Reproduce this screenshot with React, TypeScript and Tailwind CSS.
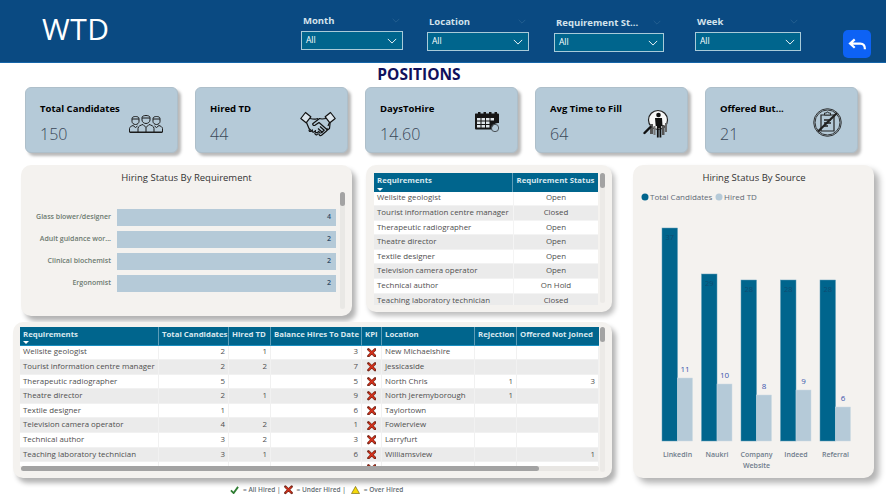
import React from 'react';

const font = "font-['Open_Sans',sans-serif]";

const Chevron = ({ className }: { className: string }) => (
    <svg viewBox="0 0 12 7" className={className} fill="none" stroke="currentColor" strokeWidth="1.1">
        <path d="M1 1l5 5 5-5" />
    </svg>
);

const Slicer = ({ label, className, boxWidth }: { label: string; className: string; boxWidth: string }) => (
    <div className={`flex flex-col ${className} ${boxWidth}`}>
        <div className="flex items-center justify-between h-[13px] pl-[2px] pr-[3px]">
            <span className="text-[9.5px] font-bold text-[#d3e3ec] whitespace-nowrap">{label}</span>
            <Chevron className="w-[8px] h-[5px] text-[#2f6796] mb-[3px]" />
        </div>
        <div className="mt-[3px] h-[19px] flex items-center justify-between bg-[#00658d] border border-[#a9cbd9] pl-[4px] pr-[5px]">
            <span className="text-[8.5px] text-white">All</span>
            <Chevron className="w-[10px] h-[6px] text-white" />
        </div>
    </div>
);

const PeopleIcon = () => (
    <svg viewBox="0 0 34 18" className="w-[34px] h-[18px]" fill="none" stroke="#1b1b1b" strokeWidth="1">
        <path d="M3 6.500V3.500C3 2 5 1.500 6.500 1.500S10 2 10 3.500v3c0 1.500-1.500 3-3.500 3S3 8 3 6.500zM3 4h7" />
        <path d="M24 6.500V3.500C24 2 26 1.500 27.500 1.500S31 2 31 3.500v3c0 1.500-1.500 3-3.500 3S24 8 24 6.500zM24 4h7" />
        <path d="M13 5V2.500C13 1 15.500.500 17 .500S21 1 21 2.500V5c0 2-2 3.500-4 3.500S13 7 13 5zM13 3h8" />
        <path d="M.5 17v-3.500c0-1.500 2-2.500 3.500-3l2.500 2 2-1.500M33.500 17v-3.500c0-1.500-2-2.500-3.500-3l-2.500 2-2-1.500" />
        <path d="M9 17v-3.500C9 11 12 10 14 9.500l3 3 3-3c2 .500 5 1.500 5 4V17M17 12.500V17" />
        <path d="M.5 17.300h33" strokeWidth="1.400" />
    </svg>
);

const HandshakeIcon = () => (
    <svg viewBox="0 0 36 28" className="w-[36px] h-[28px]" fill="none" stroke="#111" strokeWidth="1.200" strokeLinejoin="round">
        <path d="M.8 7.500L5.500 1.500l5.300 4.300-4.700 6z" fill="#dbe5ec" />
        <path d="M35.200 7.500L30.500 1.500l-5.300 4.300 4.700 6z" fill="#dbe5ec" />
        <path d="M10 7.500c2 .500 4 1 6 .500l2-.500M26 7.500l-4 .500-2.500-.500-6.500 5c-1 1 .500 2.500 2 1.800l4-2.800 8.500 7.500 2-1.500 .5-4.500 0-1" />
        <path d="M6.500 11.500l2.500 6 2 2" />
        <path d="M29.500 11.500l-1.500 3.500" />
        <path d="M9.500 18.500c-1 1 0 2.500 1.500 1.700l1.500-1.200c-1 1.200 0 2.700 1.500 1.900l1.500-1.300c-.800 1.300.500 2.700 2 1.800l1.500-1.200c-.500 1.300 1 2.300 2.200 1.500l3-2.500" />
        <path d="M15 21.800c-.500 1.200 .800 2.400 2 1.800l1.500-1.200M19 23c0 1.200 1.200 2 2.500 1.200l5-4.200c1.200-1 .800-2.200 .200-2.700" />
        <path d="M20 15.500l4.500 4M18 17.500l4.500 4" />
    </svg>
);

const CalendarIcon = () => (
    <svg viewBox="0 0 26 21" className="w-[26px] h-[21px]">
        <path d="M1.500 2.500H4V1h2.500v1.500h3V1H12v1.500h3V1h2.500v1.500h3V1H23v1.500h1a1 1 0 0 1 1 1V12a6 6 0 0 0-7 6.500H2a1 1 0 0 1-1-1V3a.5.5 0 0 1 .5-.5z" fill="#161616" />
        <g fill="#dfe6ea">
            <rect x="3" y="7" width="3.500" height="2.500" />
            <rect x="7.500" y="7" width="3.500" height="2.500" />
            <rect x="12" y="7" width="3.500" height="2.500" />
            <rect x="16.500" y="7" width="3.500" height="2.500" />
            <rect x="3" y="10.500" width="3.500" height="2.500" />
            <rect x="7.500" y="10.500" width="3.500" height="2.500" />
            <rect x="12" y="10.500" width="3.500" height="2.500" />
            <rect x="3" y="14" width="3.500" height="2.500" />
            <rect x="7.500" y="14" width="3.500" height="2.500" />
            <rect x="12" y="14" width="3.500" height="2.500" />
        </g>
        <circle cx="21" cy="17" r="3.700" fill="none" stroke="#4b5257" strokeWidth="1" />
    </svg>
);

const SearchPersonIcon = () => (
    <svg viewBox="0 0 26 29" className="w-[26px] h-[29px]">
        <circle cx="15" cy="11" r="9.500" fill="#f6f7f7" stroke="#222" strokeWidth="1.200" />
        <rect x="7" y="15" width="3" height="10" fill="#555" />
        <rect x="10.500" y="17" width="2" height="9" fill="#777" />
        <rect x="19" y="16" width="2.500" height="10" fill="#555" />
        <rect x="22" y="14" width="2" height="9" fill="#666" />
        <circle cx="15.500" cy="6" r="2.300" fill="#111" />
        <path d="M12 9h7l.500 8h-1.200v11.500h-1.800V19h-.800v9.500h-1.800V17h-1.200z" fill="#111" />
        <path d="M7.500 18L1.500 24" stroke="#111" strokeWidth="2.400" strokeLinecap="round" />
    </svg>
);

const NoClipboardIcon = () => (
    <svg viewBox="0 0 29 29" className="w-[29px] h-[29px]" fill="none" stroke="#222" strokeWidth="0.900">
        <circle cx="14.500" cy="14.500" r="13.800" />
        <circle cx="14.500" cy="14.500" r="12.500" />
        <path d="M8 7h13v16H8z" strokeWidth="1.200" />
        <path d="M11.500 7V5h2c0-1.500 2-1.500 2 0h2v2z" fill="#b5cad8" />
        <path d="M11 12h7M11 15h7M11 18h4" strokeWidth="1.300" />
        <path d="M5 23.500L24 5" strokeWidth="2.200" />
    </svg>
);

const KpiCard = ({ title, value, icon, iconClass }: { title: string; value: string; icon: React.ReactNode; iconClass: string }) => (
    <div className="relative w-[153px] h-[66px] bg-[#b5cad8] rounded-[6px] border border-[#aebfca] shadow-[3px_3px_3px_rgba(0,0,0,0.28)] pl-[14px]">
        <div className="pt-[14px] h-[29px] text-[9.5px] leading-[13px] font-bold text-black whitespace-nowrap">{title}</div>
        <div className="mt-[6px] text-[16px] leading-[22px] font-light text-[#3b4859]">{value}</div>
        <div className={`absolute ${iconClass}`}>{icon}</div>
    </div>
);

const hbars = [
    { name: 'Glass blower/designer', v: 4 },
    { name: 'Adult guidance wor...', v: 2 },
    { name: 'Clinical biochemist', v: 2 },
    { name: 'Ergonomist', v: 2 },
];

const BarPanel = () => (
    <div className="relative w-[331px] h-[151px] bg-[#f4f2ef] rounded-[10px] shadow-[4px_5px_5px_rgba(0,0,0,0.3)]">
        <div className="pt-[6px] text-center text-[9.500px] leading-[14px] text-[#333]">Hiring Status By Requirement</div>
        <div className="mt-[24px] flex flex-col gap-[5.500px]">
            {hbars.map(b => (
                <div key={b.name} className="flex items-center h-[16.500px]">
                    <div className="w-[90px] text-right text-[7px] font-semibold text-[#6c7a70] whitespace-nowrap">{b.name}</div>
                    <div className="ml-[6px] w-[219px] h-full bg-[#b5cad8] flex items-center justify-end pr-[5px] text-[7px] font-semibold text-[#2f4a66]">{b.v}</div>
                </div>
            ))}
        </div>
        <div className="absolute left-[319px] top-[27px] w-[5px] h-[117px] bg-[#e9e8e5] rounded-full">
            <div className="w-full h-[14px] bg-[#a3a3a3] rounded-full" />
        </div>
    </div>
);

const SortMark = () => (
    <svg viewBox="0 0 6 3" className="absolute left-[3px] bottom-[1px] w-[6px] h-[3px]">
        <path d="M0 0h6L3 3z" fill="#fff" />
    </svg>
);

const statusRows = [
    ['Wellsite geologist', 'Open'],
    ['Tourist information centre manager', 'Closed'],
    ['Therapeutic radiographer', 'Open'],
    ['Theatre director', 'Open'],
    ['Textile designer', 'Open'],
    ['Television camera operator', 'Open'],
    ['Technical author', 'On Hold'],
    ['Teaching laboratory technician', 'Closed'],
];

const headCell = 'relative flex items-start pt-[1px] px-[3px] bg-[#00658d] border-r border-[#5d9db8] text-[7.800px] leading-[12px] font-bold text-[#d8e8ef] whitespace-nowrap';

const StatusTable = () => (
    <div className="relative w-[246px] h-[147px] ml-[14px] bg-[#f4f2ef] rounded-[10px] shadow-[3px_4px_5px_rgba(0,0,0,0.25)] pl-[8px] pt-[8px]">
        <div className="w-[224px] h-[132px] overflow-hidden">
            <div className="grid grid-cols-[139px_85px] grid-rows-[18.500px] auto-rows-[14.600px] text-[7.900px] text-[#4f4f4f]">
                <div className={headCell}>Requirements<SortMark /></div>
                <div className={`${headCell} justify-center border-r-0`}>Requirement Status</div>
                {statusRows.map((r, i) => (
                    <React.Fragment key={r[0]}>
                        <div className={`flex items-center pl-[3px] border-b border-[#f2f2f2] whitespace-nowrap ${i % 2 ? 'bg-[#ebebeb]' : 'bg-white'}`}>{r[0]}</div>
                        <div className={`flex items-center justify-center border-l border-[#f4f4f4] border-b ${i % 2 ? 'bg-[#ebebeb]' : 'bg-white'}`}>{r[1]}</div>
                    </React.Fragment>
                ))}
            </div>
        </div>
        <div className="absolute left-[234px] top-[8px] w-[5px] h-[130px] bg-[#eceae7] rounded-full">
            <div className="w-full h-[15px] bg-[#a3a3a3] rounded-full" />
        </div>
    </div>
);

const RedX = () => (
    <svg viewBox="0 0 10 10" className="w-[9.500px] h-[9.500px]">
        <path d="M1.500 1.500l7 7M8.500 1.500l-7 7" stroke="#7a2a1c" strokeWidth="2.800" strokeLinecap="round" />
        <path d="M1.800 1.800l6.400 6.400M8.200 1.800l-6.400 6.400" stroke="#d8301a" strokeWidth="1.500" />
    </svg>
);

const mainRows = [
    ['Wellsite geologist', '2', '1', '3', 'New Michaelshire', '', ''],
    ['Tourist information centre manager', '2', '2', '7', 'Jessicaside', '', ''],
    ['Therapeutic radiographer', '5', '', '5', 'North Chris', '1', '3'],
    ['Theatre director', '2', '1', '9', 'North Jeremyborough', '1', ''],
    ['Textile designer', '1', '', '6', 'Taylortown', '', ''],
    ['Television camera operator', '4', '2', '1', 'Fowlerview', '', ''],
    ['Technical author', '3', '2', '3', 'Larryfurt', '', ''],
    ['Teaching laboratory technician', '3', '1', '6', 'Williamsview', '', '1'],
    ['Teaching assistant', '1', '', '2', 'Lindaton', '', ''],
];

const MainTable = () => {
    const cell = 'flex items-center border-b border-r border-[#f1f1f1] px-[3px] whitespace-nowrap';
    const head = `${headCell} border-b border-b-[#1a8fc0]`;
    return (
        <div className="relative w-[599px] h-[156px] mt-[6px] bg-[#f4f2ef] rounded-[10px] shadow-[4px_5px_5px_rgba(0,0,0,0.3)] pl-[7px] pt-[5px]">
            <div className="w-[579px] h-[139px] overflow-hidden">
                <div className="grid grid-cols-[139px_70px_42px_91px_20px_93px_42px_82px] grid-rows-[18.500px] auto-rows-[14.600px] text-[7.900px] text-[#4f4f4f]">
                    <div className={head}>Requirements<SortMark /></div>
                    <div className={head}>Total Candidates</div>
                    <div className={head}>Hired TD</div>
                    <div className={head}>Balance Hires To Date</div>
                    <div className={head}>KPI</div>
                    <div className={head}>Location</div>
                    <div className={head}>Rejection</div>
                    <div className={`${head} border-r-0`}>Offered Not Joined</div>
                    {mainRows.map((r, i) => {
                        const bg = i % 2 ? 'bg-[#ebebeb]' : 'bg-white';
                        return (
                            <React.Fragment key={r[0]}>
                                <div className={`${cell} ${bg}`}>{r[0]}</div>
                                <div className={`${cell} ${bg} justify-end`}>{r[1]}</div>
                                <div className={`${cell} ${bg} justify-end`}>{r[2]}</div>
                                <div className={`${cell} ${bg} justify-end`}>{r[3]}</div>
                                <div className={`${cell} ${bg} justify-center`}><RedX /></div>
                                <div className={`${cell} ${bg}`}>{r[4]}</div>
                                <div className={`${cell} ${bg} justify-end`}>{r[5]}</div>
                                <div className={`${cell} ${bg} justify-end`}>{r[6]}</div>
                            </React.Fragment>
                        );
                    })}
                </div>
            </div>
            <div className="ml-[1px] w-[578px] h-[5px] bg-[#e8e6e3] rounded-full">
                <div className="w-[518px] h-full bg-[#a3a3a3] rounded-full" />
            </div>
            <div className="absolute left-[587px] top-[5px] w-[5px] h-[145px] bg-[#eceae7] rounded-full">
                <div className="w-full h-[15px] bg-[#a3a3a3] rounded-full" />
            </div>
        </div>
    );
};

const sources = [
    { name: ['LinkedIn'], total: 37, hired: 11, x: 29, top: 63, hiredTop: 213 },
    { name: ['Naukri'], total: 29, hired: 10, x: 68.500, top: 109, hiredTop: 219 },
    { name: ['Company', 'Website'], total: 28, hired: 8, x: 108, top: 115, hiredTop: 230 },
    { name: ['Indeed'], total: 28, hired: 9, x: 147.500, top: 115, hiredTop: 225 },
    { name: ['Referral'], total: 28, hired: 6, x: 187, top: 115, hiredTop: 242 },
];

const SourceChart = () => (
    <div className="w-[241px] h-[313px] bg-[#f4f2ef] rounded-[10px] shadow-[5px_5px_6px_rgba(0,0,0,0.3)]">
        <svg viewBox="0 0 241 313" className="w-[241px] h-[313px]">
            <g fontFamily="'Open Sans',sans-serif">
                <text x="121" y="16" textAnchor="middle" fontSize="9.500" fill="#333">Hiring Status By Source</text>
                <circle cx="12" cy="32" r="3.500" fill="#00658d" />
                <text x="17" y="35" fontSize="8" fill="#5f6975">Total Candidates</text>
                <circle cx="86" cy="32" r="3.500" fill="#b5cad8" />
                <text x="91" y="35" fontSize="8" fill="#5f6975">Hired TD</text>
                {sources.map(s => (
                    <g key={s.x}>
                        <rect x={s.x} y={s.top} width="15.500" height={276 - s.top} fill="#00658d" stroke="#5d9db8" strokeWidth="0.500" />
                        <rect x={s.x + 15.500} y={s.hiredTop} width="15" height={276 - s.hiredTop} fill="#b5cad8" stroke="#cddbe4" strokeWidth="0.500" />
                        <text x={s.x + 7.700} y={s.top + 12} textAnchor="middle" fontSize="7.500" fill="#0f4c72">{s.total}</text>
                        <text x={s.x + 23} y={s.hiredTop - 6} textAnchor="middle" fontSize="8" fill="#3a55ad">{s.hired}</text>
                        {s.name.map((n, i) => (
                            <text key={n} x={s.x + 15.500} y={292 + i * 11} textAnchor="middle" fontSize="7" fontWeight="600" fill="#6f7c8c">{n}</text>
                        ))}
                    </g>
                ))}
            </g>
        </svg>
    </div>
);

export default function App() {
    return (
        <div className={`w-[886px] h-[496px] overflow-hidden bg-white ${font}`}>
            {/* HEADER */}
            <header className="h-[63px] flex items-start bg-[#0a4a82] border-b border-[#1565a8]">
                <div className="ml-[42px] w-[259px] mt-[13px] text-[30px] leading-[32px] font-normal tracking-[0.5px] text-white">WTD</div>
                <Slicer label="Month" className="mt-[15px]" boxWidth="w-[102px]" />
                <Slicer label="Location" className="mt-[16px] ml-[24px]" boxWidth="w-[102px]" />
                <Slicer label="Requirement St..." className="mt-[17px] ml-[25px]" boxWidth="w-[110px]" />
                <Slicer label="Week" className="mt-[16px] ml-[31px]" boxWidth="w-[106px]" />
                <button className="ml-[42px] mt-[30px] w-[28px] h-[28px] rounded-[5px] bg-[#0d62f5] flex items-center justify-center">
                    <svg viewBox="0 0 20 14" className="w-[19px] h-[13px]" fill="none" stroke="#fff" strokeWidth="2.400">
                        <path d="M7 1.500L2 6l5 4.500M2.500 6H13c3 0 5 2 5 6" />
                    </svg>
                </button>
            </header>

            <h1 className="h-[24px] pr-[48px] text-center text-[15.500px] leading-[23px] font-bold text-[#10105c]">POSITIONS</h1>

            {/* KPI CARDS */}
            <section className="flex gap-[17px] ml-[25px]">
                <KpiCard title="Total Candidates" value="150" icon={<PeopleIcon />} iconClass="left-[103px] top-[27px]" />
                <KpiCard title="Hired TD" value="44" icon={<HandshakeIcon />} iconClass="left-[104px] top-[23px]" />
                <KpiCard title="DaysToHire" value="14.60" icon={<CalendarIcon />} iconClass="left-[108px] top-[23px]" />
                <KpiCard title="Avg Time to Fill" value="64" icon={<SearchPersonIcon />} iconClass="left-[107px] top-[21px]" />
                <KpiCard title="Offered But..." value="21" icon={<NoClipboardIcon />} iconClass="left-[107px] top-[20px]" />
            </section>

            {/* MAIN AREA */}
            <main className="flex mt-[12px] ml-[13px]">
                <div className="w-[599px]">
                    <div className="flex ml-[8px]">
                        <BarPanel />
                        <StatusTable />
                    </div>
                    <MainTable />
                </div>
                <div className="ml-[21px]">
                    <SourceChart />
                </div>
            </main>

            {/* KPI LEGEND */}
            <footer className="pt-[7px] ml-[230px] flex items-center gap-[2px] h-[16px] text-[6.500px] font-semibold text-[#5f6b70] whitespace-nowrap">
                <svg viewBox="0 0 10 9" className="w-[9px] h-[8px]"><path d="M1 5l3 3 5-7" fill="none" stroke="#2e7d32" strokeWidth="2" /></svg>
                <span className="ml-[2px]">= All Hired |</span>
                <span className="w-[9px] h-[9px] ml-[1px] flex"><RedX /></span>
                <span className="ml-[2px]">= Under Hired |</span>
                <svg viewBox="0 0 10 9" className="w-[9px] h-[8px] ml-[3px]"><path d="M5 .5L9.500 8.500H.5z" fill="#f5d90a" stroke="#6b5a00" strokeWidth="0.700" /></svg>
                <span className="ml-[2px]">= Over Hired</span>
            </footer>
        </div>
    );
}
